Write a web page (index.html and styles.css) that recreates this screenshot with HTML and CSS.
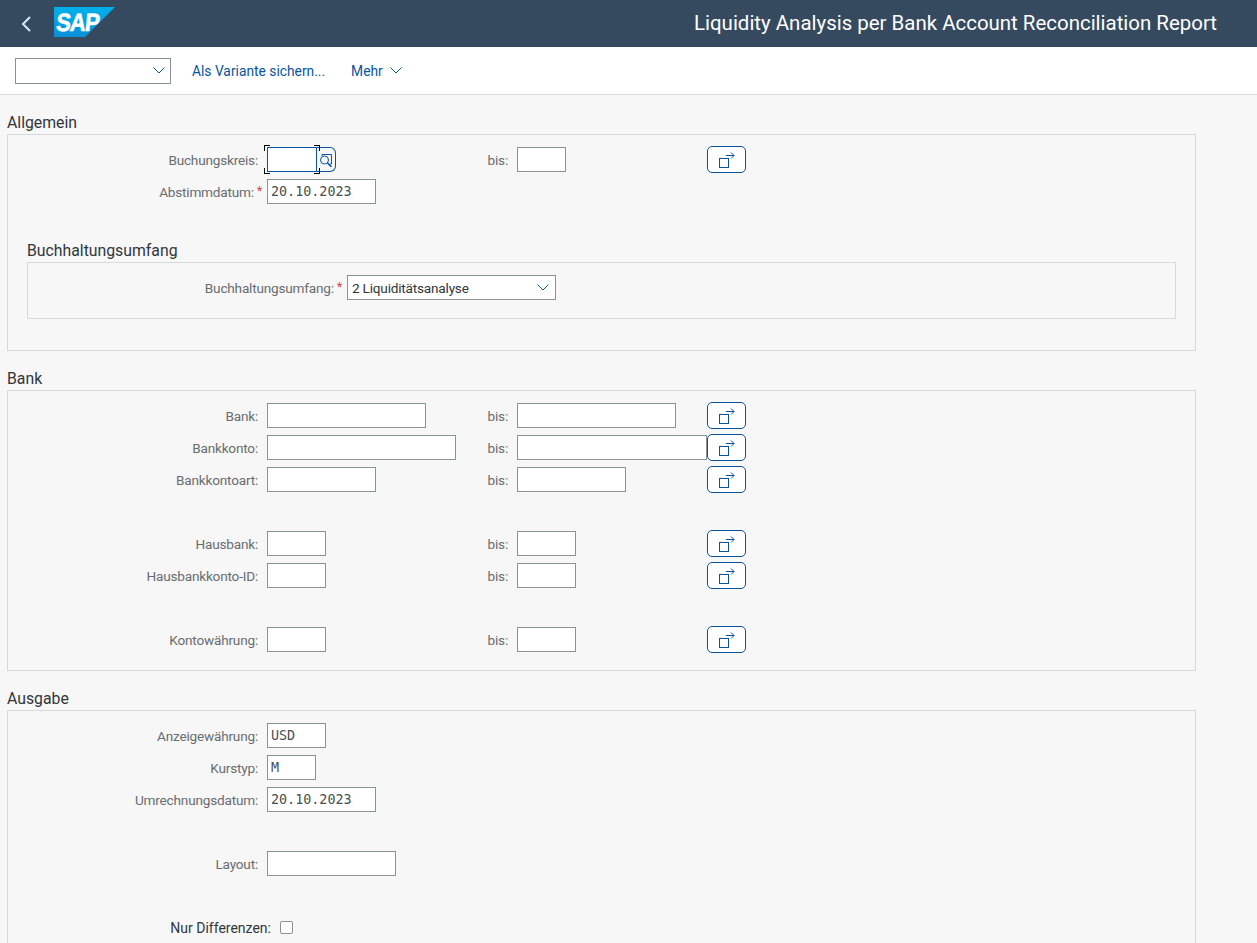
FILE: index.html
```html
<!DOCTYPE html>
<html lang="de">
<head>
<meta charset="UTF-8" />
<title>Liquidity Analysis per Bank Account Reconciliation Report</title>
<link rel="stylesheet" href="styles.css">
</head>
<body>

<svg class="icon-defs" width="0" height="0">
  <defs>
    <symbol id="multi" viewBox="0 0 16 16">
      <rect x="0.5" y="6.5" width="9" height="9" fill="none" stroke="#0854a0"/>
      <path d="M7 3.5h8M12 0.5l3 3-3 3" fill="none" stroke="#0854a0"/>
    </symbol>
    <symbol id="chev" viewBox="0 0 12 7">
      <path d="M0.5 0.5l5.5 5.5 5.5-5.5" fill="none" stroke="currentColor" stroke-width="1"/>
    </symbol>
  </defs>
</svg>

<header class="shell">
  <svg class="back" viewBox="0 0 10 16" width="10" height="16"><path d="M9 1L2 8l7 7" fill="none" stroke="#d1e8ff" stroke-width="2"/></svg>
  <svg class="logo" viewBox="0 0 61 30" width="61" height="30">
    <defs>
      <linearGradient id="sapblue" x1="0" y1="0" x2="0" y2="1">
        <stop offset="0" stop-color="#00b1eb"/>
        <stop offset="1" stop-color="#0a8fd8"/>
      </linearGradient>
    </defs>
    <polygon points="0,0 61,0 31,30 0,30" fill="url(#sapblue)"/>
    <text transform="translate(1.5 24) skewX(-6) scale(.88 1)" class="logo-text">SAP</text>
  </svg>
  <h1 class="shell-title">Liquidity Analysis per Bank Account Reconciliation Report</h1>
</header>

<div class="toolbar">
  <div class="variant">
    <svg class="chev" width="12" height="7"><use href="#chev"/></svg>
  </div>
  <a class="tool-link save-link">Als Variante sichern...</a>
  <a class="tool-link more-link">Mehr <svg class="chev-more" width="12" height="7"><use href="#chev"/></svg></a>
</div>

<main class="content">

  <h2 class="group-title">Allgemein</h2>
  <section class="group">
    <div class="row">
      <label class="lbl">Buchungskreis:</label>
      <div class="field focused">
        <input class="inp w50 active" type="text">
        <button class="f4"><svg width="14" height="14" viewBox="0 0 14 14"><path d="M3 2.5V1h9.5v9.5H11" fill="none" stroke="#0854a0" transform="translate(0 .5)"/><circle cx="5.5" cy="7" r="4" fill="none" stroke="#0854a0"/><path d="M8.5 10l4 4" stroke="#0854a0" stroke-width="1.6"/></svg></button>
        <i class="corner tl"></i><i class="corner tr"></i><i class="corner bl"></i><i class="corner br"></i>
      </div>
      <label class="lbl-bis">bis:</label>
      <input class="inp w49" type="text">
      <button class="multi"><svg width="16" height="16"><use href="#multi"/></svg></button>
    </div>
    <div class="row">
      <label class="lbl req">Abstimmdatum: <em>*</em></label>
      <input class="inp w109 mono" type="text" value="20.10.2023">
    </div>

    <h3 class="group-title sub-title">Buchhaltungsumfang</h3>
    <section class="group nested">
      <div class="row">
        <label class="lbl req">Buchhaltungsumfang: <em>*</em></label>
        <div class="combo">2 Liquiditätsanalyse <svg class="chev" width="12" height="7"><use href="#chev"/></svg></div>
      </div>
    </section>
    <div class="group-end"></div>
  </section>

  <h2 class="group-title">Bank</h2>
  <section class="group">
    <div class="row">
      <label class="lbl">Bank:</label>
      <input class="inp w159" type="text">
      <label class="lbl-bis">bis:</label>
      <input class="inp w159" type="text">
      <button class="multi"><svg width="16" height="16"><use href="#multi"/></svg></button>
    </div>
    <div class="row">
      <label class="lbl">Bankkonto:</label>
      <input class="inp w189" type="text">
      <label class="lbl-bis">bis:</label>
      <input class="inp w190" type="text">
      <button class="multi"><svg width="16" height="16"><use href="#multi"/></svg></button>
    </div>
    <div class="row">
      <label class="lbl">Bankkontoart:</label>
      <input class="inp w109" type="text">
      <label class="lbl-bis">bis:</label>
      <input class="inp w109" type="text">
      <button class="multi"><svg width="16" height="16"><use href="#multi"/></svg></button>
    </div>
    <div class="row"></div>
    <div class="row">
      <label class="lbl">Hausbank:</label>
      <input class="inp w59" type="text">
      <label class="lbl-bis">bis:</label>
      <input class="inp w59" type="text">
      <button class="multi"><svg width="16" height="16"><use href="#multi"/></svg></button>
    </div>
    <div class="row">
      <label class="lbl">Hausbankkonto-ID:</label>
      <input class="inp w59" type="text">
      <label class="lbl-bis">bis:</label>
      <input class="inp w59" type="text">
      <button class="multi"><svg width="16" height="16"><use href="#multi"/></svg></button>
    </div>
    <div class="row"></div>
    <div class="row">
      <label class="lbl">Kontowährung:</label>
      <input class="inp w59" type="text">
      <label class="lbl-bis">bis:</label>
      <input class="inp w59" type="text">
      <button class="multi"><svg width="16" height="16"><use href="#multi"/></svg></button>
    </div>
  </section>

  <h2 class="group-title">Ausgabe</h2>
  <section class="group">
    <div class="row">
      <label class="lbl">Anzeigewährung:</label>
      <input class="inp w59 mono" type="text" value="USD">
    </div>
    <div class="row">
      <label class="lbl">Kurstyp:</label>
      <input class="inp w49 mono" type="text" value="M">
    </div>
    <div class="row">
      <label class="lbl">Umrechnungsdatum:</label>
      <input class="inp w109 mono" type="text" value="20.10.2023">
    </div>
    <div class="row"></div>
    <div class="row">
      <label class="lbl">Layout:</label>
      <input class="inp w129" type="text">
    </div>
    <div class="row"></div>
    <div class="row">
      <label class="lbl lbl-check">Nur Differenzen:</label>
      <span class="check"></span>
    </div>
  </section>

</main>

</body>
</html>
```

FILE: styles.css
```css
:root {
  --shell: #354a5f;
  --link: #0854a0;
  --border: #89919a;
  --group-line: #d9d9d9;
  --bg: #f7f7f7;
  --text: #32363a;
  --label: #6a6d70;
  --font-body: Roboto, sans-serif;
}

html, body { height: 100%; overflow: hidden; }

body {
  margin: 0;
  background: var(--bg);
  color: var(--text);
  font-family: var(--font-body);
  font-size: 13.6px;
  letter-spacing: -0.2px;
}

.icon-defs { position: absolute; }

.shell {
  display: flex;
  align-items: center;
  height: 47px;
  background: var(--shell);
  padding: 0 40px 0 21px;
}
.back { margin-right: 23px; }
.logo { margin-top: -3px; }
.logo-text {
  font-family: "Liberation Sans", sans-serif;
  font-size: 25px;
  font-weight: bold;
  letter-spacing: -1px;
  fill: #fff;
  stroke: #fff;
  stroke-width: 0.6px;
}
.shell-title {
  margin: 0 0 1px auto;
  color: #fff;
  font-size: 20.45px;
  font-weight: 400;
  letter-spacing: 0;
}

.toolbar {
  display: flex;
  align-items: center;
  height: 47px;
  padding-left: 15px;
  background: #fff;
  border-bottom: 1px solid var(--group-line);
  font-size: 13.8px;
  letter-spacing: 0;
}
.variant {
  display: flex;
  align-items: center;
  justify-content: flex-end;
  box-sizing: border-box;
  width: 156px;
  height: 26px;
  padding-right: 5px;
  border: 1px solid var(--border);
  color: var(--link);
}
.tool-link { color: var(--link); }
.save-link { margin-left: 21px; }
.more-link { display: flex; align-items: center; gap: 7px; margin-left: 26px; }
.chev { display: block; }

.content { padding: 0 61px 0 7px; }

.group-title {
  margin: 15px 0 0;
  height: 24px;
  line-height: 26px;
  font-size: 15.8px;
  font-weight: 400;
  letter-spacing: 0;
}
.sub-title { margin: 34px 0 0 19px; }

.group {
  border: 1px solid var(--group-line);
  padding: 12px 0 18px;
}
.nested { margin: 0 19px 0 19px; }
.group-end { height: 13px; }

.row {
  display: grid;
  grid-template-columns: 259px 190px 60px 190px 39px;
  grid-template-rows: 25px;
  align-items: center;
  justify-items: start;
  margin-bottom: 7px;
}
.row:last-child { margin-bottom: 0; }

.lbl {
  justify-self: stretch;
  padding: 1px 9px 0 0;
  text-align: right;
  color: var(--label);
}
.lbl em {
  color: #d9404a;
  font-style: normal;
  font-size: 12px;
  vertical-align: 2px;
}
.req { padding-right: 5px; }
.nested .row { grid-template-columns: 319px 209px; }
.lbl-check {
  margin-right: -13px;
  padding-top: 0;
  color: var(--text);
  font-size: 14px;
  letter-spacing: 0;
}
.lbl-bis {
  grid-column: 3;
  justify-self: stretch;
  padding: 1px 9px 0 0;
  text-align: right;
  color: var(--label);
}

.inp {
  box-sizing: border-box;
  height: 25px;
  margin: 0;
  padding: 0 3px;
  border: 1px solid var(--border);
  border-radius: 0;
  outline: none;
  background: #fff;
  color: var(--text);
  font-family: var(--font-body);
  font-size: 13.6px;
}
.mono {
  font-family: "DejaVu Sans Mono", monospace;
  font-size: 13.4px;
  letter-spacing: 0;
  color: #4b4f53;
}
.active { border-color: var(--link); }
.w49 { width: 49px; }
.w50 { width: 50px; }
.w59 { width: 59px; }
.w109 { width: 109px; }
.w129 { width: 129px; }
.w159 { width: 159px; }
.w189 { width: 189px; }
.w190 { width: 190px; }

.field { position: relative; display: flex; width: 69px; height: 25px; }
.f4 {
  display: flex;
  align-items: center;
  justify-content: center;
  box-sizing: border-box;
  width: 20px;
  height: 25px;
  margin-left: -1px;
  padding: 0;
  border: 1px solid var(--link);
  border-left: 0;
  border-radius: 0 6px 6px 0;
  background: transparent;
}
.corner {
  position: absolute;
  width: 5px;
  height: 5px;
  border: 0 solid #000;
}
.tl { left: -3px; top: -2px; border-width: 1px 0 0 1px; }
.tr { left: 47px; top: -2px; border-width: 1px 1px 0 0; }
.bl { left: -3px; bottom: -2px; border-width: 0 0 1px 1px; }
.br { left: 47px; bottom: -2px; border-width: 0 1px 1px 0; }

.multi {
  display: flex;
  align-items: center;
  justify-content: center;
  box-sizing: border-box;
  width: 39px;
  height: 27px;
  padding: 0;
  border: 1px solid var(--link);
  border-radius: 5px;
  background: #fff;
}

.combo {
  display: flex;
  align-items: center;
  justify-content: space-between;
  box-sizing: border-box;
  width: 209px;
  height: 25px;
  padding: 0 6px 0 4px;
  border: 1px solid var(--border);
  background: #fff;
}
.combo .chev { color: var(--link); }

.check {
  box-sizing: border-box;
  width: 13px;
  height: 13px;
  margin-left: 13px;
  border: 1px solid var(--border);
  border-radius: 2px;
  background: #fff;
}
```
